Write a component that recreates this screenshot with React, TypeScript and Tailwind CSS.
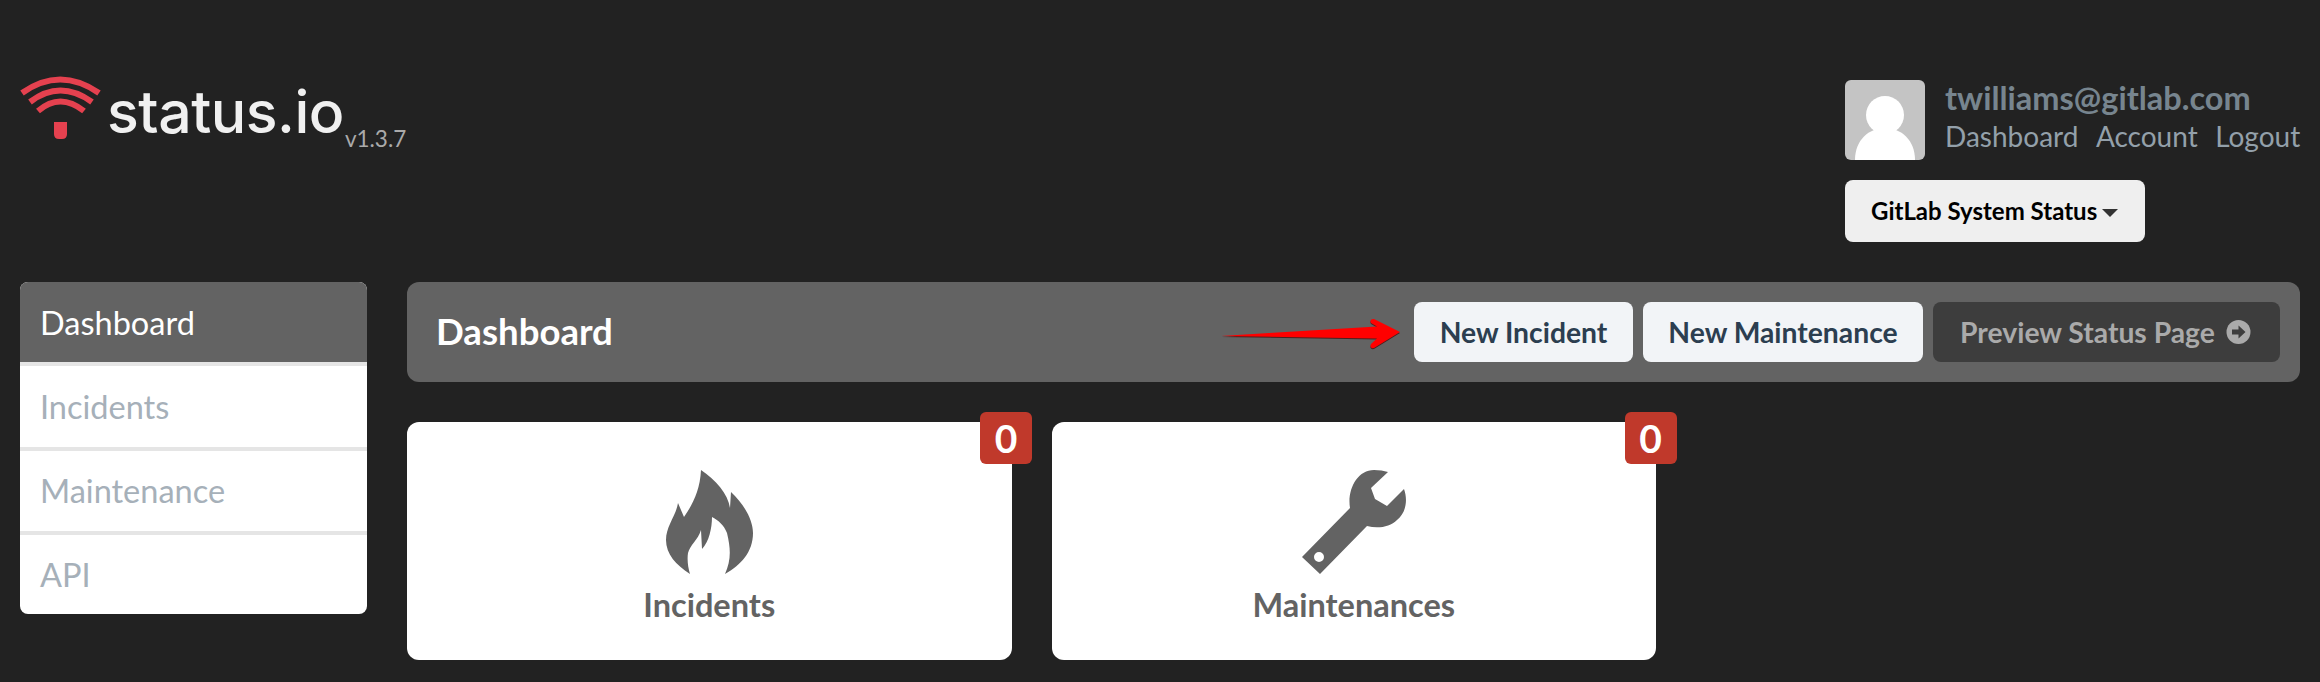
const lato = 'font-["Lato",sans-serif]';

function WifiLogo() {
  return (
    <svg width="81" height="65" viewBox="0 0 81 65" fill="none">
      <path d="M2 18Q40 -9 79 18" stroke="#e5414f" strokeWidth="6" />
      <path d="M10 27Q40 4 72 27" stroke="#e5414f" strokeWidth="6" />
      <path d="M18 36Q40 17 64 36" stroke="#e5414f" strokeWidth="6" />
      <path d="M34 47H47V59Q47 64 42 64H39Q34 64 34 59Z" fill="#e5414f" />
    </svg>
  );
}

function Avatar() {
  return (
    <svg width="80" height="80" viewBox="0 0 80 80" className="rounded-md shrink-0">
      <rect width="80" height="80" fill="#c4c4c4" />
      <circle cx="40" cy="35" r="19" fill="#fff" />
      <path d="M10 80C10 60 24 48 40 48S70 60 70 80Z" fill="#fff" />
    </svg>
  );
}

function RedArrow() {
  return (
    <svg width="180" height="32" viewBox="-4 0 180 32" className="shrink-0 mr-[3px] mt-1 drop-shadow-[0_1px_0_#4a2020]">
      <path
        d="M-4 18L152 8.5L146 5Q144 1 149 1L175 14L149 30Q144 31 146 26L152 20.5Z"
        fill="#f00"
      />
    </svg>
  );
}

function PreviewIcon() {
  return (
    <svg width="25" height="24" viewBox="0 0 25 24" className="shrink-0">
      <circle cx="12.5" cy="12" r="12" fill="#aaaaaa" />
      <path d="M6 9.5H12.5V5.5L19.5 12L12.5 18.5V14.5H6Z" fill="#3d3d3d" />
    </svg>
  );
}

function Flame() {
  return (
    <svg width="87" height="104" viewBox="0 0 87 104">
      <path
        d="M35 0C50 10 62 24 64 38L65 22C78 34 87 50 87 63C87 82 75 95 59 104C65 90 65 80 61 63C58 55 52 50 46 47C46 58 43 72 36 79L35 60C32 70 24 75 22 83C21 90 22 97 24 104C10 95 0 84 0 70C0 56 10 46 12 33L18 47C27 34 34 20 35 0Z"
        fill="#636363"
      />
    </svg>
  );
}

function Wrench() {
  return (
    <svg width="104" height="104" viewBox="0 0 104 104">
      <path
        fillRule="evenodd"
        d="M86 2L69 18L73 29L85 36L102 19C106 30 104 43 95 50C88 57 76 59 65 56L18 104L0 87L48 38C45 20 55 0 72 0Q80 0 86 2ZM17 82A5 5 0 1 0 17 92A5 5 0 1 0 17 82Z"
        fill="#636363"
      />
    </svg>
  );
}

function StatCard({ label, icon }: { label: string; icon: React.ReactNode }) {
  return (
    <div className="relative w-[604.5px] h-[238px] bg-white rounded-xl flex flex-col items-center pt-12">
      <div className="absolute -top-[10px] -right-[20.5px] w-[52px] h-[52px] rounded-md bg-[#c0392b] text-white text-[39px] font-bold leading-[52px] text-center">
        0
      </div>
      {icon}
      <div className="mt-[9px] text-[32.5px] leading-[44px] font-bold text-[#636363]">{label}</div>
    </div>
  );
}

export default function App() {
  return (
    <div className={`${lato} h-[682px] bg-[#222222] px-5 overflow-hidden`}>
      {/* Header */}
      <div className="h-[282px] flex justify-between">
        <div className="flex items-start pt-[75px]">
          <WifiLogo />
          <div className="ml-[6px] mt-[5px] font-['Inter',sans-serif] font-medium text-[59px] leading-[64px] text-[#f0f0f0] tracking-[-0.5px]">
            status.io
          </div>
          <div className="ml-[1px] mt-[50px] text-[22.5px] leading-[28px] text-[#aaaaaa]">v1.3.7</div>
        </div>
        <div className="pt-20 w-[455px] shrink-0">
          <div className="flex gap-5">
            <Avatar />
            <div className="-mt-[2px]">
              <div className="text-[32.5px] leading-[40px] font-bold text-[#77858f]">twilliams@gitlab.com</div>
              <div className="flex gap-[17.5px] text-[28px] leading-[36px] text-[#93a0aa]">
                <span>Dashboard</span>
                <span>Account</span>
                <span>Logout</span>
              </div>
            </div>
          </div>
          <button className="mt-5 h-[62px] w-[300px] pl-[26px] flex items-center rounded-lg bg-[#efefef] text-black text-[24px] font-bold">
            GitLab System Status
            <span className="ml-[5px] mt-[3px] border-x-[8px] border-x-transparent border-t-[8px] border-t-[#333333]" />
          </button>
        </div>
      </div>

      {/* Body */}
      <div className="flex gap-10">
        <div className="w-[347px] shrink-0 h-[332px] rounded-lg overflow-hidden bg-white flex flex-col text-[32.5px] text-[#a6b0b9]">
          <div className="h-20 shrink-0 bg-[#636363] text-white pl-5 pt-[2px] flex items-center">Dashboard</div>
          <div className="h-20 shrink-0 border-t-4 border-[#e5e5e5] box-content pl-5 pt-[1px] flex items-center">Incidents</div>
          <div className="h-20 shrink-0 border-t-4 border-[#e5e5e5] box-content pl-5 flex items-center">Maintenance</div>
          <div className="h-20 shrink-0 border-t-4 border-[#e5e5e5] box-content pl-5 flex items-center">API</div>
        </div>

        <div className="flex-1">
          <div className="h-[100px] bg-[#636363] rounded-xl pl-[30px] pr-5 flex items-center">
            <div className="text-[36.6px] font-bold text-white -ml-[1px] -mt-[2px]">Dashboard</div>
            <div className="ml-auto flex items-center gap-[10px] text-[28.3px] font-bold text-[#2c3e50]">
              <RedArrow />
              <button className="h-[60px] w-[219px] rounded-lg bg-[#f2f4f7]">New Incident</button>
              <button className="h-[60px] w-[280px] rounded-lg bg-[#f2f4f7]">New Maintenance</button>
              <button className="h-[60px] w-[347px] rounded-lg bg-[#3d3d3d] text-[#aaaaaa] flex items-center justify-center gap-[11px] pr-[2px]">
                Preview Status Page
                <PreviewIcon />
              </button>
            </div>
          </div>

          <div className="mt-10 flex gap-10">
            <StatCard label="Incidents" icon={<Flame />} />
            <StatCard label="Maintenances" icon={<Wrench />} />
          </div>
        </div>
      </div>
    </div>
  );
}
